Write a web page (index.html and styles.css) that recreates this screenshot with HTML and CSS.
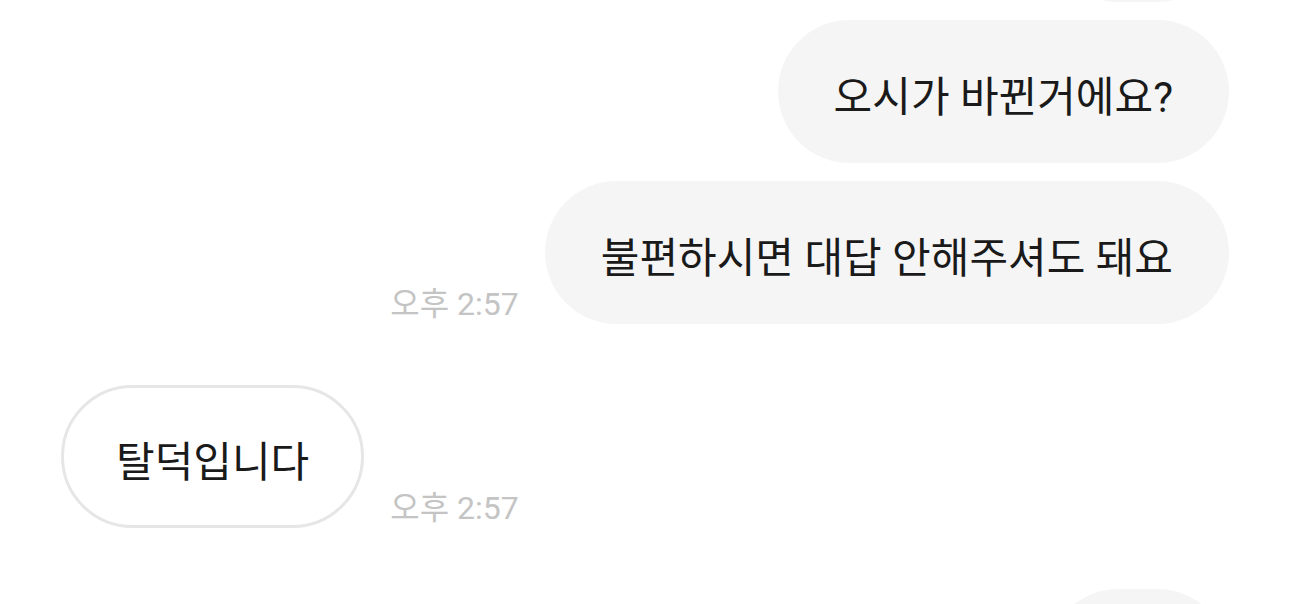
FILE: index.html
```html
<!DOCTYPE html>
<html lang="ko">
<head>
<meta charset="utf-8">
<title>Chat</title>
<link rel="stylesheet" href="styles.css">
</head>
<body>
<main class="chat">
  <div class="row sent first">
    <div class="bubble sent-bubble partial"></div>
  </div>
  <div class="row sent cont">
    <div class="bubble sent-bubble">오시가 바뀐거에요?</div>
  </div>
  <div class="row sent cont">
    <span class="time">오후 2:57</span>
    <div class="bubble sent-bubble">불편하시면 대답 안해주셔도 돼요</div>
  </div>
  <div class="row received group">
    <div class="bubble recv-bubble">탈덕입니다</div>
    <span class="time">오후 2:57</span>
  </div>
  <div class="row sent group">
    <div class="bubble sent-bubble partial"></div>
  </div>
</main>
</body>
</html>
```

FILE: styles.css
```css
html, body {
  margin: 0;
  padding: 0;
  background: #ffffff;
  overflow: hidden;
  height: 604px;
}

.chat {
  display: flex;
  flex-direction: column;
  padding: 0 61px;
  font-family: Roboto, "Noto Sans CJK KR", sans-serif;
}

.row {
  display: flex;
  align-items: flex-end;
  gap: 26px;
}

.row.sent {
  justify-content: flex-end;
}

.row.received {
  justify-content: flex-start;
}

.row.first {
  margin-top: -141px;
}

.row.cont {
  margin-top: 18px;
}

.row.group {
  margin-top: 61px;
}

.bubble {
  box-sizing: border-box;
  height: 143px;
  padding: 4px 56px 0;
  display: flex;
  align-items: center;
  border-radius: 72px;
  font-size: 42px;
  color: #1a1a1a;
  white-space: nowrap;
}

.sent-bubble {
  background: #f5f5f5;
}

.partial {
  width: 182px;
}

.recv-bubble {
  background: #ffffff;
  border: 3px solid #e6e6e6;
  padding: 4px 52px 0;
}

.time {
  font-size: 32px;
  color: #c4c4c4;
  line-height: 32px;
  padding-bottom: 4px;
  white-space: nowrap;
}
```
